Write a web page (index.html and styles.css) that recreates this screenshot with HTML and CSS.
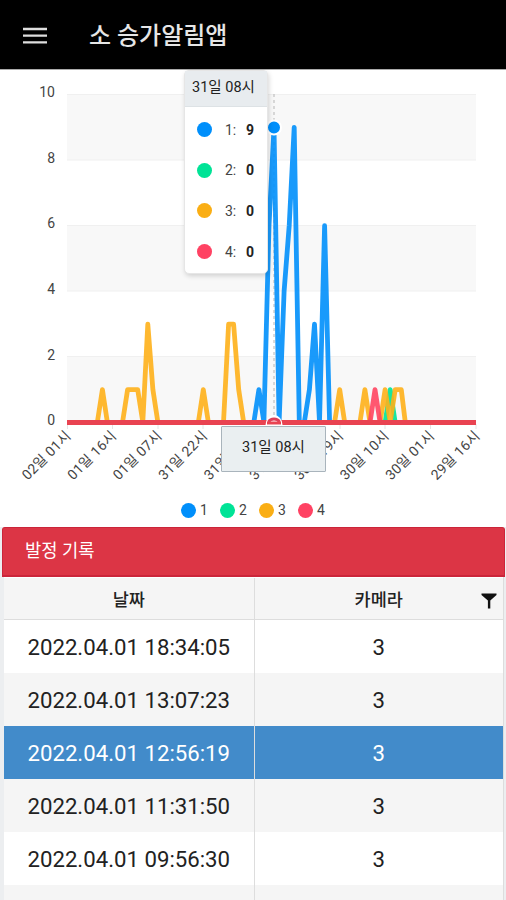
FILE: index.html
```
<!DOCTYPE html>
<html lang="ko">
<head>
<meta charset="utf-8">
<title>소 승가알림앱</title>
<link rel="stylesheet" href="styles.css">
</head>
<body>
<header class="appbar">
  <svg class="menu" width="24" height="18" viewBox="0 0 24 18" aria-hidden="true"><path d="M0 2h24M0 8.700h24M0 15.400h24" stroke="#dedede" stroke-width="2.300"/></svg>
  <h1 class="app-title">소 승가알림앱</h1>
</header>

<section class="chart">
  <svg class="plot" width="506" height="426" viewBox="0 69 506 426">
    <g fill="#f8f8f8"><path d="M67 94h409v66H67zM67 225h409v66H67zM67 356h409v66H67z"/></g>
    <path d="M67 94.5h409M67 160h409M67 225.5h409M67 291h409M67 356.500h409" stroke="#f0f0f0"/>
    <path d="M67.500 424v5M112.500 424v5M158 424v5M203 424v5M340 424v5M385 424v5M430.500 424v5M476 424v5" stroke="#e4e4e4"/>
    <path d="M274 94V422" stroke="#b6b6b6" stroke-dasharray="3 3"/>
    <g class="series">
      <path stroke="#008ffb" d="M67 422.500H253.800L258.900 389.700L263.900 422L269 225.700L274 127.300L279.100 422L284.100 291.300L289.200 225.700L294.200 127.300L299.300 422.500H304.300L309.400 389.700L314.500 324.100L319.500 422L324.600 225.700L329.600 422.500H476"/>
      <path stroke="#00e396" d="M385.100 422.500L390.200 389.700L395.200 422.500"/>
      <path stroke="#feb019" d="M97.300 422.500L102.400 389.700L107.400 422.500H122.500L127.600 389.700H137.700L142.800 422L147.800 324.100L152.900 389.700L157.900 422.500M198.300 422.500L203.300 389.700L208.400 422.500H223.500L228.600 324.100H233.600L238.700 389.700L243.700 422.500M334.600 422.500L339.700 389.700L344.700 422.500H359.900L364.900 389.700L370 422.500H380.100L385.100 389.700L390.200 422L395.200 389.700H401.300L405.300 422.500"/>
      <path stroke="#ff4560" d="M370 422.500L375 389.700L380.100 422.500"/>
    </g>
    <path d="M67 422.500H476" stroke="#e94351" stroke-width="4.800"/>
    <circle cx="274" cy="127.500" r="7" fill="#008ffb" stroke="#fff" stroke-width="2"/>
    <path d="M265.500 425a8.500 10 0 0 1 17 0z" fill="#fff"/>
    <path d="M268.500 422a6 5 0 0 1 11 0" fill="none" stroke="#df3f58" stroke-width="2.800"/>
    <path d="M267 423h14" stroke="#e94351" stroke-width="3"/>
    <g class="ylabels" text-anchor="end">
      <text x="55" y="97">10</text><text x="55" y="162.500">8</text><text x="55" y="228">6</text><text x="55" y="294">4</text><text x="55" y="359.500">2</text><text x="55" y="425">0</text>
    </g>
    <g class="xlabels" text-anchor="end">
      <text transform="translate(71.500 437) rotate(-45)" textLength="62">02일 01시</text>
      <text transform="translate(117 437) rotate(-45)" textLength="62">01일 16시</text>
      <text transform="translate(162.500 437) rotate(-45)" textLength="62">01일 07시</text>
      <text transform="translate(208 437) rotate(-45)" textLength="62">31일 22시</text>
      <text transform="translate(253.500 437) rotate(-45)" textLength="62">31일 13시</text>
      <text transform="translate(299 437) rotate(-45)" textLength="62">31일 04시</text>
      <text transform="translate(344 437) rotate(-45)" textLength="62">30일 19시</text>
      <text transform="translate(389.500 437) rotate(-45)" textLength="62">30일 10시</text>
      <text transform="translate(435 437) rotate(-45)" textLength="62">30일 01시</text>
      <text transform="translate(480.500 437) rotate(-45)" textLength="62">29일 16시</text>
    </g>
  </svg>
  <div class="legend">
    <span class="key"><i class="dot s1"></i>1</span>
    <span class="key"><i class="dot s2"></i>2</span>
    <span class="key"><i class="dot s3"></i>3</span>
    <span class="key"><i class="dot s4"></i>4</span>
  </div>
  <div class="tooltip">
    <div class="tip-title">31일 08시</div>
    <div class="tip-row"><i class="dot s1"></i><span class="name">1:</span><b>9</b></div>
    <div class="tip-row"><i class="dot s2"></i><span class="name">2:</span><b>0</b></div>
    <div class="tip-row"><i class="dot s3"></i><span class="name">3:</span><b>0</b></div>
    <div class="tip-row"><i class="dot s4"></i><span class="name">4:</span><b>0</b></div>
  </div>
  <div class="xtip">31일 08시</div>
</section>

<section class="records">
  <h2 class="records-title">발정 기록</h2>
  <div class="grid">
    <div class="row head"><div class="cell">날짜</div><div class="cell">카메라<svg class="filter" width="16" height="16" viewBox="0 0 16 16" aria-hidden="true"><path d="M.5.500h15v1.500L9.300 7.500v8H6.900v-8L.5 2z" fill="#111"/></svg></div></div>
    <div class="row"><div class="cell">2022.04.01 18:34:05</div><div class="cell">3</div></div>
    <div class="row alt"><div class="cell">2022.04.01 13:07:23</div><div class="cell">3</div></div>
    <div class="row selected"><div class="cell">2022.04.01 12:56:19</div><div class="cell">3</div></div>
    <div class="row alt"><div class="cell">2022.04.01 11:31:50</div><div class="cell">3</div></div>
    <div class="row"><div class="cell">2022.04.01 09:56:30</div><div class="cell">3</div></div>
    <div class="row alt"><div class="cell"></div><div class="cell"></div></div>
  </div>
</section>
</body>
</html>
```
FILE: styles.css
```
* { box-sizing: border-box; }
body {
  margin: 0;
  height: 900px;
  overflow: hidden;
  display: flex;
  flex-direction: column;
  background: #fff;
  color: #222;
  font-family: Roboto, "Noto Sans CJK KR", sans-serif;
}
.appbar {
  flex: none;
  height: 69px;
  display: flex;
  align-items: center;
  gap: 42px;
  padding: 2px 23px 0;
  background: #000;
}
.app-title {
  margin: 0;
  color: #e6e6e6;
  font-size: 24px;
  font-weight: 500;
  line-height: 30px;
}
.chart {
  flex: none;
  position: relative;
  height: 458px;
  background: #fff;
  box-shadow: inset 0 1px 0 #aaa;
}
.plot { display: block; }
.series path {
  fill: none;
  stroke-width: 4.800;
  stroke-opacity: .9;
  stroke-linejoin: round;
}
.ylabels, .xlabels { fill: #444; font-size: 14px; }
.legend {
  display: flex;
  justify-content: center;
  gap: 12px;
  height: 32px;
  padding: 5px 0 0;
}
.key {
  display: flex;
  align-items: center;
  gap: 4px;
  height: 20px;
  width: 27px;
  color: #444;
  font-size: 14px;
}
.dot {
  flex: none;
  width: 15px;
  height: 15px;
  border-radius: 50%;
}
.s1 { background: #008ffb; }
.s2 { background: #00e396; }
.s3 { background: #faae14; }
.s4 { background: #ff4263; }
.tooltip {
  position: absolute;
  left: 184px;
  top: 1px;
  width: 84px;
  height: 204px;
  background: #fff;
  border: 1px solid #e6e6e6;
  border-radius: 5px;
  box-shadow: 1px 2px 5px rgba(0, 0, 0, .16);
}
.tip-title {
  height: 36px;
  padding-left: 7px;
  background: #e8ecef;
  border-bottom: 1px solid #dde2e5;
  font-size: 14.500px;
  line-height: 34px;
  white-space: nowrap;
}
.tip-row {
  display: flex;
  align-items: center;
  height: 40.600px;
  padding: 5px 0 0 12px;
  font-size: 14px;
}
.tip-row .name { width: 21px; margin-left: 13px; color: #444; }
.tip-row b { font-weight: 700; }
.xtip {
  position: absolute;
  left: 221px;
  top: 357px;
  width: 105px;
  height: 46px;
  background: #eaeff1;
  border: 1px solid #a9b4bc;
  border-radius: 1px;
  font-size: 14.500px;
  line-height: 42px;
  text-align: center;
}
.records {
  flex: 1;
  display: flex;
  flex-direction: column;
  background: #eceef0;
}
.records-title {
  flex: none;
  height: 50px;
  margin: 0 1px 0 2px;
  padding-left: 22px;
  background: #dc3545;
  border: 1px solid #cb253a;
  border-bottom-width: 2px;
  border-radius: 3px 3px 0 0;
  color: #fff;
  font-size: 17.700px;
  font-weight: 400;
  line-height: 46px;
}
.grid {
  margin: 0 2px 0 4px;
  border-right: 1px solid #ddd;
}
.row {
  display: grid;
  grid-template-columns: 250.500px 1fr;
  height: 53.100px;
  background: #fff;
  font-size: 22.200px;
}
.cell {
  position: relative;
  display: flex;
  align-items: center;
  justify-content: center;
}
.cell:first-child { border-right: 1px solid #ddd; }
.alt { background: #f5f5f5; }
.selected { background: #428bca; color: #fff; }
.head {
  height: 43px;
  background: #f5f5f5;
  border-top: 1px solid #fff;
  border-bottom: 1px solid #ddd;
  font-size: 17.500px;
  font-weight: 500;
}
.filter { position: absolute; right: 6px; top: 15px; }
```
